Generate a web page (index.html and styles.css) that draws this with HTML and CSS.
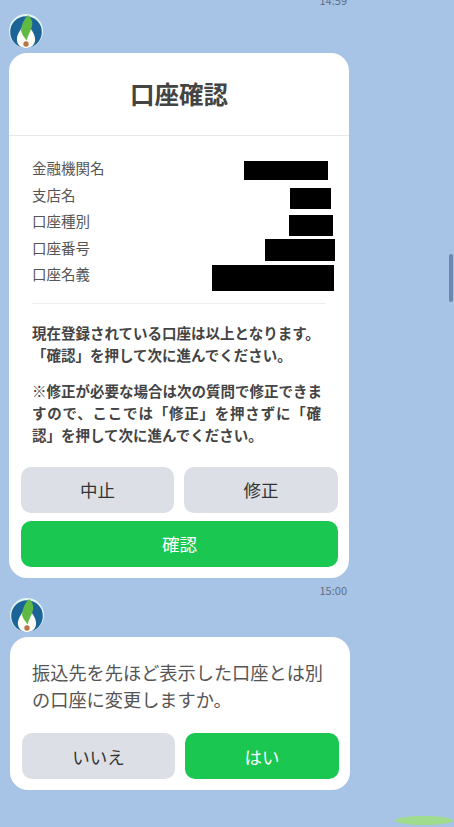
FILE: index.html
```html
<!DOCTYPE html>
<html lang="ja">
<head>
<meta charset="utf-8">
<title>口座確認</title>
<link rel="stylesheet" href="styles.css">
</head>
<body>
<main class="chat">
  <div class="time time-first">14:59</div>
  <svg class="avatar avatar-a" viewBox="0 0 34 34" aria-hidden="true">
    <circle cx="17" cy="17" r="17" fill="#e4f4ef"/>
    <circle cx="17" cy="18" r="15.800" fill="#1a6498"/>
    <path d="M17 8C21 14 27 20 26 27C25 32 21 34 17 34C13 34 9 32 8 27C7 20 13 14 17 8Z" fill="#fdfcf6"/>
    <path d="M19 1C22.500 4 24 8 23 12C22 17 19 21 17.500 26.500C15.500 23 12.500 20.500 12 16.500C12.500 10.500 15 5 19 1Z" fill="#5fb944"/>
    <circle cx="17" cy="30" r="2.700" fill="#b9754a"/>
  </svg>
  <section class="card card-main">
    <h1 class="title">口座確認</h1>
    <div class="body">
      <dl class="rows">
        <div class="row"><dt>金融機関名</dt><dd class="redact r1"></dd></div>
        <div class="row"><dt>支店名</dt><dd class="redact r2"></dd></div>
        <div class="row"><dt>口座種別</dt><dd class="redact r3"></dd></div>
        <div class="row"><dt>口座番号</dt><dd class="redact r4"></dd></div>
        <div class="row"><dt>口座名義</dt><dd class="redact r5"></dd></div>
      </dl>
      <div class="notes">
        <p>現在登録されている口座は以上となります。<br>「確認」を押して次に進んでください。</p>
        <p>※修正が必要な場合は次の質問で修正できま<span class="just">すので、ここでは「修正」を押さずに「確</span>認」を押して次に進んでください。</p>
      </div>
    </div>
    <div class="actions">
      <button class="btn">中止</button>
      <button class="btn">修正</button>
      <button class="btn primary wide">確認</button>
    </div>
  </section>
  <div class="time time-second">15:00</div>
  <svg class="avatar avatar-b" viewBox="0 0 34 34" aria-hidden="true">
    <circle cx="17" cy="17" r="17" fill="#e4f4ef"/>
    <circle cx="17" cy="18" r="15.800" fill="#1a6498"/>
    <path d="M17 8C21 14 27 20 26 27C25 32 21 34 17 34C13 34 9 32 8 27C7 20 13 14 17 8Z" fill="#fdfcf6"/>
    <path d="M19 1C22.500 4 24 8 23 12C22 17 19 21 17.500 26.500C15.500 23 12.500 20.500 12 16.500C12.500 10.500 15 5 19 1Z" fill="#5fb944"/>
    <circle cx="17" cy="30" r="2.700" fill="#b9754a"/>
  </svg>
  <section class="card card-question">
    <p class="question">振込先を先ほど表示した口座とは別<br>の口座に変更しますか。</p>
    <div class="actions actions-question">
      <button class="btn">いいえ</button>
      <button class="btn primary">はい</button>
    </div>
  </section>
</main>
<div class="scrollbar"></div>
<div class="glow"></div>
</body>
</html>
```
FILE: styles.css
```css
* { box-sizing: border-box; }
html, body { margin: 0; height: 100%; }
body {
  background: #a7c3e6;
  font-family: "Noto Sans CJK JP", "Noto Sans", sans-serif;
  color: #444;
  overflow: hidden;
  position: relative;
}
.chat { display: flex; flex-direction: column; height: 827px; }
.time { font-size: 11px; line-height: 14px; color: #5f6f86; align-self: flex-end; }
.time-first { margin: -7px 107px 0 0; }
.time-second { margin: 5px 107px 0 0; }
.avatar { display: block; width: 34px; height: 34px; }
.avatar-a { margin: 7px 0 0 9px; }
.avatar-b { margin: 1px 0 0 10px; }
.card { width: 340px; background: #fff; border-radius: 18px; }
.card-main { margin: 5px 0 0 9px; height: 525px; }
.card-question { margin: 5px 0 0 10px; height: 153px; padding: 22px 12px 0; }
.title {
  margin: 0; height: 83px; border-bottom: 1px solid #e6e8eb;
  font-size: 24.500px; line-height: 81px; font-weight: 700; text-align: center; color: #444;
}
.body { padding: 18.500px 23px 0; }
.rows { margin: 0; padding-bottom: 16px; border-bottom: 1px solid #eeeff1; }
.row { position: relative; height: 26.500px; display: flex; align-items: center; }
.row dt { font-size: 14.500px; color: #555; }
.redact { position: absolute; margin: 0; background: #000; }
.r1 { left: 212px; top: 6.500px; width: 84px; height: 19px; }
.r2 { left: 258px; top: 6.500px; width: 41px; height: 21px; }
.r3 { left: 257px; top: 7px; width: 44px; height: 21px; }
.r4 { left: 233px; top: 4.500px; width: 70px; height: 22px; }
.r5 { left: 180px; top: 4px; width: 122px; height: 26px; }
.notes { padding-top: 18px; }
.notes p { margin: 0 0 14px; font-size: 14.500px; line-height: 22px; font-weight: 700; color: #444; }
.just { display: block; width: 289px; text-align: justify; text-align-last: justify; text-justify: inter-character; }
.actions { display: grid; grid-template-columns: 153px 154px; gap: 8px 10px; padding: 0 12px; margin-top: 20.500px; }
.actions-question { padding: 0; margin-top: 20px; }
.btn {
  height: 46px; border: 0; border-radius: 10px; background: #dcdfe6; color: #333;
  font: 400 17.500px "Noto Sans CJK JP", sans-serif; padding: 0;
}
.primary { background: #19c751; color: #fff; }
.wide { grid-column: 1 / -1; }
.question { margin: 0; padding-left: 10px; font-size: 18.200px; line-height: 27px; color: #555; }
.scrollbar { position: absolute; left: 449px; top: 254px; width: 4px; height: 48px; background: #6c86ad; border-radius: 2px; }
.glow { position: absolute; left: 395px; top: 816px; width: 58px; height: 9px; border-radius: 50%; background: #9fdc8d; }
```
